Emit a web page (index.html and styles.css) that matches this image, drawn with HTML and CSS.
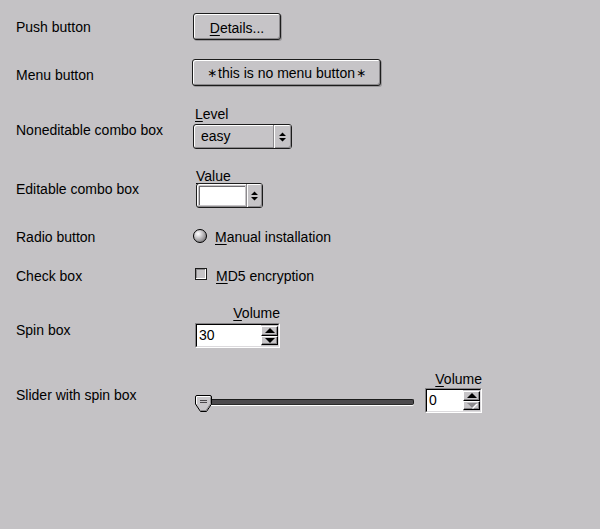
FILE: index.html
```html
<!DOCTYPE html>
<html>
<head>
<meta charset="utf-8">
<title>Widgets</title>
<link rel="stylesheet" href="styles.css">
</head>
<body>
<div class="form">
  <div class="row row-push">
    <div class="label">Push button</div>
    <div class="ctl"><div class="btn btn-details"><u>D</u>etails...</div></div>
  </div>

  <div class="row row-menu">
    <div class="label shift2">Menu button</div>
    <div class="ctl"><div class="btn btn-menu"><span class="ast">∗</span>this is no menu button<span class="ast">∗</span></div></div>
  </div>

  <div class="row row-combo1">
    <div class="label shift1">Noneditable combo box</div>
    <div class="ctl stack">
      <div class="mini"><u>L</u>evel</div>
      <div class="combo combo-fixed">
        <div class="combo-text">easy</div>
        <div class="combo-arrows">
          <svg width="7" height="10" viewBox="0 0 7 10"><path d="M3.5 0.5 L7 4 L0 4Z M0 6 L7 6 L3.5 9.5Z" fill="#000"/></svg>
        </div>
      </div>
    </div>
  </div>

  <div class="row row-combo2">
    <div class="label">Editable combo box</div>
    <div class="ctl stack indent3">
      <div class="mini flush"><u>V</u>alue</div>
      <div class="combo combo-edit">
        <div class="combo-field"></div>
        <div class="combo-arrows narrow">
          <svg width="7" height="10" viewBox="0 0 7 10"><path d="M3.5 0.5 L7 4 L0 4Z M0 6 L7 6 L3.5 9.5Z" fill="#000"/></svg>
        </div>
      </div>
    </div>
  </div>

  <div class="row row-radio">
    <div class="label">Radio button</div>
    <div class="ctl choice">
      <span class="radio"></span>
      <span class="choice-text"><u>M</u>anual installation</span>
    </div>
  </div>

  <div class="row row-check">
    <div class="label">Check box</div>
    <div class="ctl choice indent2">
      <span class="check"></span>
      <span class="choice-text check-text"><u>M</u>D5 encryption</span>
    </div>
  </div>

  <div class="row row-spin">
    <div class="label shift2">Spin box</div>
    <div class="ctl stack indent2 spin-wide">
      <div class="mini right"><u>V</u>olume</div>
      <div class="spin">
        <div class="spin-body">
          <div class="spin-value">30</div>
          <div class="spin-btns">
            <div class="spin-btn"><span class="tri-up"></span></div>
            <div class="spin-btn"><span class="tri-down"></span></div>
          </div>
        </div>
      </div>
    </div>
  </div>

  <div class="row row-slider">
    <div class="label shift1">Slider with spin box</div>
    <div class="ctl slider-line">
      <div class="slider">
        <div class="groove"></div>
        <svg class="handle" width="17" height="17" viewBox="0 0 17 17">
          <path d="M2 0.5 H15 Q16.5 0.5 16.5 2 V9 L11.5 16.5 H5.5 L0.5 9 V2 Q0.5 0.5 2 0.5Z" fill="#c9c7ca" stroke="#000"/>
          <path d="M1.5 9 V2 Q1.5 1.5 2 1.5 H15" fill="none" stroke="#fff"/>
          <path d="M15.5 2.5 V8.7 L11 15.5 H6" fill="none" stroke="#8c8a8d"/>
          <path d="M5 5.5 H12 M5 7.5 H12" stroke="#4a484b"/>
        </svg>
      </div>
      <div class="stack spin-narrow">
        <div class="mini right"><u>V</u>olume</div>
        <div class="spin">
          <div class="spin-body">
            <div class="spin-value">0</div>
            <div class="spin-btns">
              <div class="spin-btn"><span class="tri-up"></span></div>
              <div class="spin-btn"><span class="tri-down disabled"></span></div>
            </div>
          </div>
        </div>
      </div>
    </div>
  </div>
</div>
</body>
</html>
```

FILE: styles.css
```css
html, body {
  margin: 0;
  padding: 0;
  background: #c4c2c5;
}
body {
  width: 600px;
  height: 529px;
  overflow: hidden;
  font-family: "Liberation Sans", Arial, sans-serif;
  font-size: 14px;
  color: #000;
}
u {
  text-decoration: underline;
  text-underline-offset: 2px;
}
.form {
  display: flex;
  flex-direction: column;
  padding: 13px 0 0 16px;
}
.row {
  display: grid;
  grid-template-columns: 177px auto;
  align-items: center;
}
.label {
  line-height: 16px;
  white-space: nowrap;
}
.shift1 { margin-top: 3px; }
.shift2 { margin-top: 4px; }

.row-menu { margin-top: 19px; }
.row-combo1 { margin-top: 22px; }
.row-combo2 { margin-top: 21px; }
.row-radio { margin-top: 21px; }
.row-check { margin-top: 23px; }
.row-spin { margin-top: 23px; }
.row-slider { margin-top: 25px; }

.ctl {
  display: flex;
}
.stack {
  display: flex;
  flex-direction: column;
  align-items: flex-start;
}
.indent2 { margin-left: 2px; }
.indent3 { margin-left: 3px; }

.mini {
  line-height: 13px;
  padding-left: 2px;
  white-space: nowrap;
}
.mini.flush {
  padding-left: 0;
}
.mini.right {
  align-self: stretch;
  text-align: right;
  padding-left: 0;
}

/* push buttons */
.btn {
  box-sizing: border-box;
  height: 27px;
  border: 1px solid #1c1c1c;
  border-radius: 3px;
  background: #c6c4c7;
  box-shadow: inset 1px 1px 0 #fff, inset -1px -1px 0 #8c8a8d, 1px 1px 0 #9a989b;
  display: flex;
  align-items: center;
  justify-content: center;
  line-height: 16px;
  white-space: nowrap;
}
.btn-details {
  width: 88px;
  padding-top: 2px;
}
.btn-menu {
  width: 189px;
  margin-left: -1px;
}
.ast {
  font-family: "DejaVu Sans", sans-serif;
  font-size: 12px;
  margin: 0 1px;
}

/* combo boxes */
.combo {
  box-sizing: border-box;
  height: 25px;
  display: flex;
  border: 1px solid #1c1c1c;
  border-radius: 3px;
  background: #c6c4c7;
  box-shadow: inset 1px 1px 0 #fff, inset -1px -1px 0 #8c8a8d;
}
.combo-fixed {
  width: 99px;
  margin-top: 3px;
}
.combo-edit {
  width: 67px;
}
.combo-text {
  flex: 1;
  padding-left: 7px;
  line-height: 23px;
}
.combo-field {
  flex: 1;
  margin: 2px 1px 2px 2px;
  background: #fff;
  border-top: 1px solid #6f6d70;
  border-left: 1px solid #6f6d70;
}
.combo-arrows {
  width: 17px;
  border-left: 1px solid #8c8a8d;
  box-shadow: inset 1px 0 0 #fff, inset -1px -1px 0 #8c8a8d;
  display: flex;
  align-items: center;
  justify-content: center;
}
.combo-arrows.narrow {
  width: 15px;
}

/* radio & check */
.choice {
  align-items: flex-start;
  line-height: 16px;
}
.radio {
  box-sizing: border-box;
  width: 14px;
  height: 14px;
  border: 1px solid #000;
  border-radius: 50%;
  background: radial-gradient(circle at 35% 32%, #ffffff 0, #e6e4e7 18%, #a9a7aa 55%, #5a585b 100%);
}
.choice-text {
  margin-left: 8px;
}
.check {
  box-sizing: border-box;
  width: 12px;
  height: 12px;
  margin-top: 0;
  border: 1px solid #1c1c1c;
  background: #c6c4c7;
  box-shadow: inset -1px -1px 0 #fff, inset 1px 1px 0 #8c8a8d;
}
.check-text {
  margin-left: 9px;
}

/* spin boxes */
.spin-wide { width: 85px; }
.spin-narrow { width: 57px; }
.spin {
  box-sizing: border-box;
  align-self: stretch;
  height: 25px;
  margin-top: 3px;
  border: 1px solid;
  border-color: #868487 #fff #fff #868487;
  display: flex;
}
.spin-narrow .spin { margin-top: 2px; }
.spin-body {
  flex: 1;
  display: flex;
  border: 1px solid;
  border-color: #000 #dcdadd #dcdadd #000;
  background: #fff;
}
.spin-value {
  flex: 1;
  padding-left: 2px;
  line-height: 21px;
}
.spin-btns {
  width: 17px;
  display: flex;
  flex-direction: column;
  background: #c6c4c7;
  padding: 1px 0;
  box-sizing: border-box;
}
.spin-btn {
  flex: 1;
  box-sizing: border-box;
  border: 1px solid;
  border-color: #fff #000 #000 #fff;
  box-shadow: inset -1px -1px 0 #868487;
  display: flex;
  align-items: center;
  justify-content: center;
}
.tri-up, .tri-down {
  width: 0;
  height: 0;
  border-left: 5px solid transparent;
  border-right: 5px solid transparent;
}
.tri-up { border-bottom: 5px solid #000; }
.tri-down { border-top: 5px solid #000; }
.tri-down.disabled {
  border-top-color: #8c8a8d;
  filter: drop-shadow(1px 1px 0 #fff);
}

/* slider */
.slider-line {
  align-items: flex-end;
  margin-left: 2px;
}
.slider {
  position: relative;
  width: 219px;
  height: 17px;
  margin-bottom: 1px;
  margin-right: 11px;
}
.groove {
  box-sizing: border-box;
  margin-top: 4px;
  margin-left: 2px;
  height: 6px;
  border-top: 1px solid #1c1c1c;
  border-bottom: 1px solid #2a2a2a;
  border-left: 1px solid #1c1c1c;
  border-right: 1px solid #1c1c1c;
  border-radius: 2px;
  background: #4c4a4d;
  box-shadow: 0 1px 0 #fff;
}
.handle {
  position: absolute;
  left: 0;
  top: 0;
  display: block;
}
```
